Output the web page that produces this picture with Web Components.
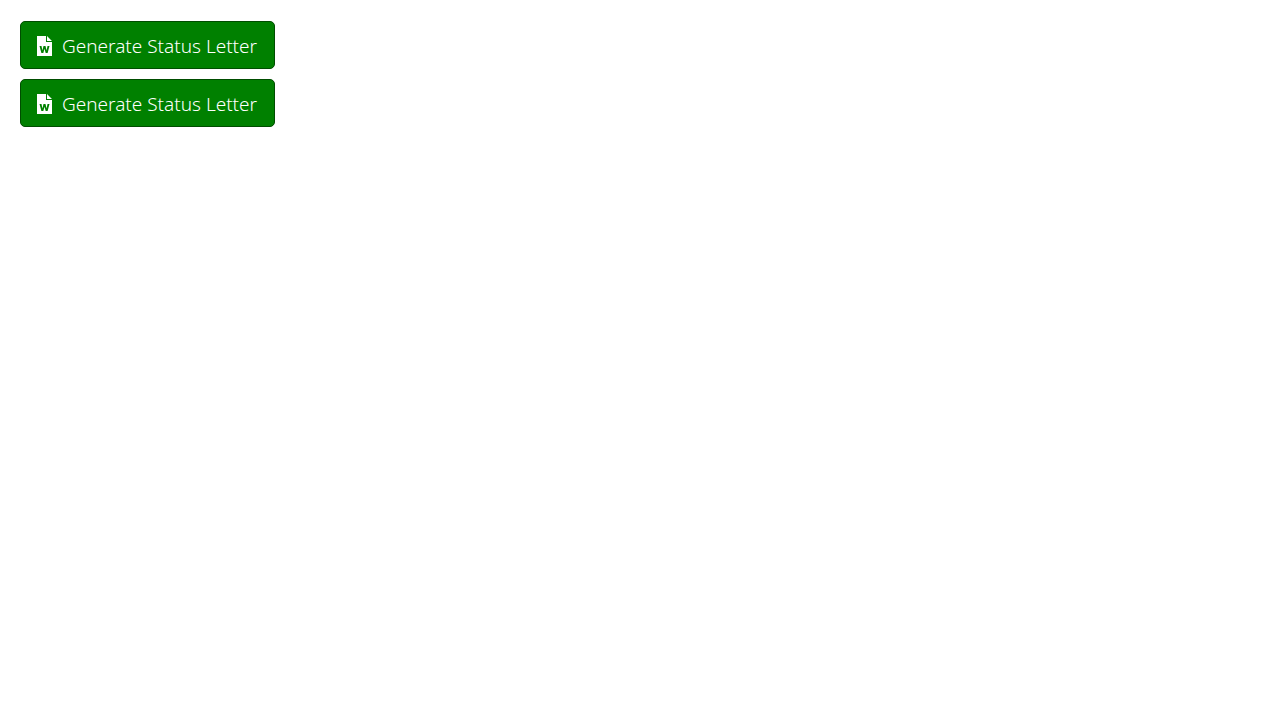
<!DOCTYPE html>
<html lang="en">
<head>
<meta charset="utf-8">
<title>Generate Status Letter</title>
<style>
  body { margin: 0; background: #fff; font-family: "Segoe UI", "Noto Sans", sans-serif; }
</style>
</head>
<body>
<button-stack>
  <letter-button>Generate Status Letter</letter-button>
  <letter-button>Generate Status Letter</letter-button>
</button-stack>

<template id="stack-template">
  <style>
    :host { display: flex; flex-direction: column; align-items: flex-start; gap: 10px; padding: 21px 20px; }
  </style>
  <slot></slot>
</template>

<template id="button-template">
  <style>
    :host { display: block; }
    button {
      display: flex; align-items: center; gap: 10px;
      margin: 0; padding: 9px 17px 7px 16px;
      border: 1px solid #004d00; border-radius: 5px;
      background: #008000; color: #fff;
      font: inherit; font-size: 19px; font-weight: 300; line-height: 30px;
      white-space: nowrap; cursor: pointer;
    }
    button:hover { background: #006b00; }
    svg { display: block; width: 15px; height: 20px; fill: currentColor; }
  </style>
  <button type="button">
    <svg viewBox="0 0 15 20" aria-hidden="true"><path fill-rule="evenodd" d="M0 0H9V6H15V20H0zM10 0L15 5H10zM2.500 10H4.500L5.400 14.400L6.500 10H8.500L9.600 14.400L10.500 10H12.500L10.600 17H8.700L7.500 12.700L6.300 17H4.400z"/></svg>
    <span><slot></slot></span>
  </button>
</template>

<script>
  function fromTemplate(id) {
    return class extends HTMLElement {
      constructor() {
        super();
        this.attachShadow({ mode: "open" })
          .append(document.getElementById(id).content.cloneNode(true));
      }
    };
  }
  customElements.define("button-stack", class extends fromTemplate("stack-template") {});
  customElements.define("letter-button", class extends fromTemplate("button-template") {});
</script>
</body>
</html>
